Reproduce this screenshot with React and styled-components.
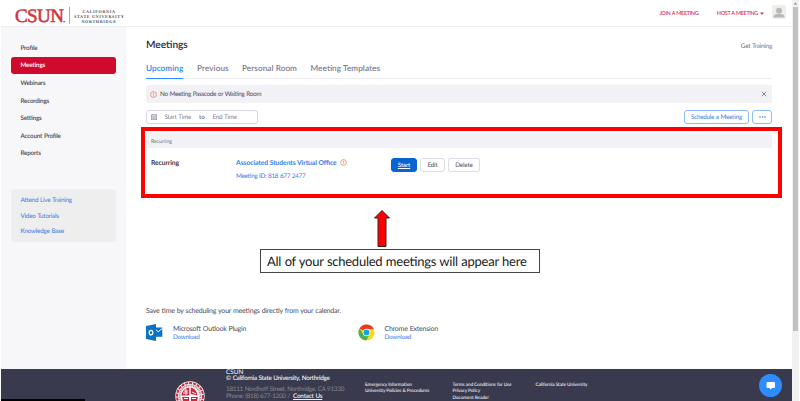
import React from "react";
import styled, { createGlobalStyle } from "styled-components";

const Global = createGlobalStyle`
  * { box-sizing: border-box; }
  body { margin: 0; background: #fff; overflow: hidden; font-family: Lato, "Liberation Sans", sans-serif; text-rendering: geometricPrecision; }
  a { color: inherit; text-decoration: none; }
  svg { display: block; }
`;

const Text = styled.span`
  display: block;
  white-space: nowrap;
  padding-top: ${(p) => p.$drop ?? 1}px;
  margin-bottom: -${(p) => p.$drop ?? 1}px;
  font-size: ${(p) => p.$size}px;
  line-height: ${(p) => p.$line || 10}px;
  font-weight: ${(p) => p.$weight || 400};
  color: ${(p) => p.$color || "#4c4c5c"};
  letter-spacing: ${(p) => p.$track || 0}px;
  word-spacing: ${(p) => (p.$track < -0.1 ? 0.4 : 0)}px;
  font-feature-settings: "liga" 1;
`;

const Page = styled.div`
  position: relative;
  display: flex;
  width: 800px;
  height: 401px;
  padding: 0 1px;
  overflow: hidden;
`;
const Window = styled.div`
  display: flex;
  flex-direction: column;
  width: 791px;
`;
const Header = styled.header`
  display: flex;
  align-items: flex-start;
  height: 27px;
  border-bottom: 1px solid #ededf0;
  padding-left: 14px;
`;
const Brand = styled.div`
  display: flex;
  padding-top: 7px;
`;
const Wordmark = styled.div`
  width: 53px;
  height: 18px;
  font: 400 19px/20px "Liberation Serif", serif;
  -webkit-text-stroke: 0.55px #d2333b;
  letter-spacing: -0.6px;
  color: #d2333b;
  white-space: nowrap;
`;
const Dot = styled.span`
  font-size: 8px;
  letter-spacing: 0;
`;
const BrandRule = styled.div`
  width: 1px;
  height: 17px;
  background: #aaa;
  margin: 0 4px 0 1px;
`;
const BrandName = styled.div`
  padding-top: 2px;
  font: 700 4.2px/5px "Liberation Serif", serif;
  letter-spacing: 0.62px;
  text-align: center;
  color: #555;
  width: 50px;
  white-space: nowrap;
`;
const TopLinks = styled.nav`
  display: flex;
  margin-left: auto;
  padding-top: 8px;
  gap: 18.5px;
`;
const HostLink = styled.div`
  display: flex;
  gap: 2px;
  svg { margin-top: 4px; }
`;
const Avatar = styled.div`
  width: 14px;
  height: 14px;
  margin: 4.5px 6px 0 8px;
  border-radius: 2px;
  background: #efeeea;
  overflow: hidden;
`;
const Body = styled.div`
  display: flex;
  height: 342px;
`;
const Sidebar = styled.aside`
  width: 125px;
  padding: 12px 10px 0;
  background: #f7f7fa;
`;
const NavItem = styled.a`
  display: flex;
  align-items: center;
  height: 17.6px;
  padding-left: 9.5px;
  border-radius: 3px;
  background: ${(p) => (p.$active ? "#cf0a2c" : "transparent")};
`;
const HelpBox = styled.div`
  display: flex;
  flex-direction: column;
  gap: 5.5px;
  height: 53px;
  margin-top: 27px;
  padding: 6px 0 0 9.5px;
  border-radius: 3px;
  background: #eeeeef;
`;
const Main = styled.main`
  width: 646px;
  padding: 9px 0 0 20px;
`;
const TitleRow = styled.div`
  display: flex;
  justify-content: space-between;
  align-items: center;
  height: 17px;
`;
const Tabs = styled.div`
  display: flex;
  gap: 14px;
  height: 26px;
  border-bottom: 1px solid #ececf0;
  padding-top: 9px;
`;
const Tab = styled.div`
  height: 17px;
  width: ${(p) => p.$w}px;
  border-bottom: 1px solid ${(p) => (p.$active ? "#2d8cff" : "transparent")};
`;
const Alert = styled.div`
  display: flex;
  align-items: center;
  height: 18px;
  margin-top: 6px;
  padding: 0 5px 0 4px;
  gap: 3px;
  border-radius: 2.5px;
  background: #f1f1f6;
  & > :last-child { margin-left: auto; }
`;
const Toolbar = styled.div`
  display: flex;
  height: 14px;
  margin-top: 7px;
  gap: 3px;
`;
const DateRange = styled.div`
  display: flex;
  align-items: center;
  width: 112px;
  margin-right: auto;
  padding-left: 3.5px;
  border: 1px solid #d8d8e3;
  border-radius: 3px;
`;
const Slot = styled.div`
  width: ${(p) => p.$w}px;
`;
const Button = styled.button`
  display: flex;
  align-items: center;
  justify-content: center;
  width: ${(p) => p.$w}px;
  height: 14px;
  padding: 0;
  border-radius: 3px;
  font-family: inherit;
  text-rendering: inherit;
  border: 1px solid ${(p) => (p.$kind === "primary" ? "#0b63d2" : p.$kind === "outline" ? "#8bbcf6" : "#dcdce4")};
  background: ${(p) => (p.$kind === "primary" ? "#0b63d2" : "#fff")};
  text-decoration: ${(p) => (p.$kind === "primary" ? "underline" : "none")};
  text-decoration-color: #fff;
`;
const ListHeader = styled.div`
  display: flex;
  align-items: center;
  height: 15px;
  margin-top: 9px;
  padding-left: 5px;
  border-radius: 2.5px;
  background: #f2f2f6;
`;
const MeetingRow = styled.div`
  display: flex;
  height: 51px;
  padding: 9px 0 0 5px;
`;
const MeetingInfo = styled.div`
  width: 155px;
`;
const MeetingTitle = styled.div`
  display: flex;
  align-items: center;
  gap: 3px;
  margin-bottom: 3.5px;
`;
const Actions = styled.div`
  display: flex;
  gap: 3px;
  margin-top: 1px;
`;
const Plugins = styled.section`
  margin-top: 106px;
`;
const PluginRow = styled.div`
  display: flex;
  padding-top: 9px;
`;
const Plugin = styled.div`
  display: flex;
  width: 211.5px;
  svg { margin-right: 10px; flex: none; }
`;
const Footer = styled.footer`
  display: flex;
  height: 32px;
  background: #3a3a4f;
`;
const FooterColumn = styled.div`
  width: ${(p) => p.$w}px;
  padding-top: ${(p) => p.$top}px;
`;
const FooterLine = styled.div`
  display: flex;
  gap: 3px;
  margin-top: ${(p) => p.$gap || 0}px;
`;
const Contact = styled.a`
  text-decoration: underline;
  text-decoration-color: #eee;
`;
const ScrollTrack = styled.div`
  width: 7px;
  height: 401px;
  background: #f1f1f1;
`;
const ScrollThumb = styled.div`
  width: 5px;
  height: 324px;
  margin-left: 1px;
  background: #c1c1c1;
`;
const StatusBar = styled.div`
  position: absolute;
  left: 1px;
  bottom: 0;
  width: 84px;
  height: 2px;
  background: #000;
`;
const Highlight = styled.div`
  position: absolute;
  left: 141px;
  top: 126.5px;
  width: 641px;
  height: 71px;
  border: 4px solid #fe0000;
`;
const Pointer = styled.svg`
  position: absolute;
  left: 373px;
  top: 209px;
`;
const Callout = styled.div`
  position: absolute;
  left: 260px;
  top: 249px;
  width: 280px;
  height: 24px;
  padding: 2px 0 0 6px;
  border: 1px solid #444;
  background: #fff;
`;
const ChatButton = styled.div`
  position: absolute;
  left: 759px;
  top: 374px;
  width: 23px;
  height: 23px;
  border-radius: 50%;
  background: #2d8cff;
`;

const Warning = () => (
  <svg width="7" height="7" viewBox="0 0 7 7" fill="none" stroke="#f0764e" strokeWidth="0.7">
    <circle cx="3.5" cy="3.5" r="2.9" />
    <path d="M3.5 1.8v2.1M3.5 4.5v.8" />
  </svg>
);
const Outlook = () => (
  <svg width="17" height="17" viewBox="0 0 17 17">
    <path d="M10 3.5h6.3v9.3H10z" fill="#0b72c6" />
    <path d="M10 5.7l2.2 2.1 4.1-3.4" fill="none" stroke="#fff" strokeWidth="1" />
    <path d="M0 2L10 0v17L0 15z" fill="#0b72c6" />
    <ellipse cx="5" cy="8.6" rx="1.8" ry="2.3" fill="none" stroke="#fff" strokeWidth="1.3" />
  </svg>
);
const Chrome = () => (
  <svg width="17" height="17" viewBox="0 0 17 17">
    <circle cx="8.5" cy="8.5" r="8" fill="#ffd51f" />
    <path d="M8.5 8.5L1.57 4.5A8 8 0 0 1 15.8 5.2H8.5z" fill="#ea3a20" />
    <path d="M1.57 4.5A8 8 0 0 0 8.2 16.5L11.6 10.5L5.4 10.5z" fill="#4cb051" />
    <circle cx="8.5" cy="8.5" r="3.7" fill="#fff" />
    <circle cx="8.5" cy="8.5" r="3" fill="#12a4dc" />
  </svg>
);
const Seal = () => (
  <svg width="30" height="20" viewBox="0 0 30 20">
    <circle cx="15" cy="15" r="14.7" fill="#f5eeee" />
    <circle cx="15" cy="15" r="13" fill="none" stroke="#cf2840" strokeWidth="2" strokeDasharray="3 1" />
    <circle cx="15" cy="15" r="10.5" fill="none" stroke="#a99a9c" strokeWidth="1.7" strokeDasharray="1.2 .6" />
    <circle cx="15" cy="15" r="8.7" fill="#fff" />
    <path d="M14.3 6.5v8H6.5a8.5 8.5 0 0 1 7.8-8zM15.7 6.5v6.5l6.5 1.5a8.5 8.5 0 0 0-6.500-8zM7 16h7v4H8zM16 16h7l-1 4h-6z" fill="#d3263e" />
    <path d="M8 12h5M9 10h4M11 8v6M17 11l4 2M9 17.5h4M17 17.5h4" stroke="#fff" strokeWidth=".9" />
  </svg>
);

const NAV = ["Profile", "Meetings", "Webinars", "Recordings", "Settings", "Account Profile", "Reports"];
const TABS = [["Upcoming", 37], ["Previous", 31], ["Personal Room", 54.5], ["Meeting Templates", 70]];
const HELP = ["Attend Live Training", "Video Tutorials", "Knowledge Base"];
const PLUGINS = [["Microsoft Outlook Plugin", Outlook], ["Chrome Extension", Chrome]];
const LEGAL = [
  [87.5, ["Emergency Information", "University Policies & Procedures"]],
  [83, ["Terms and Conditions for Use", "Privacy Policy", "Document Reader"]],
  [80, ["California State University"]],
];
const BLUE = "#3b7de8";

export default function App() {
  return (
    <Page>
      <Global />
      <Window>
        <Header>
          <Brand>
            <Wordmark>CSUN<Dot>.</Dot></Wordmark>
            <BrandRule />
            <BrandName>CALIFORNIA<br />STATE UNIVERSITY<br />NORTHRIDGE</BrandName>
          </Brand>
          <TopLinks>
            <Text $size={5.5} $track={-0.36} $color="#d8294b" $weight={500}>JOIN A MEETING</Text>
            <HostLink>
              <Text $size={5.5} $track={-0.36} $color="#d8294b" $weight={500}>HOST A MEETING</Text>
              <svg width="4" height="3" viewBox="0 0 4 3"><path d="M0 .5h4L2 2.7z" fill="#d8294b" /></svg>
            </HostLink>
          </TopLinks>
          <Avatar>
            <svg width="14" height="14" viewBox="0 0 14 14" fill="#b8b8b8">
              <circle cx="7" cy="5.7" r="3" />
              <path d="M1.5 12.5c0-3 2-3.500 5.500-3.500s5.500.5 5.500 3.500z" />
            </svg>
          </Avatar>
        </Header>
        <Body>
          <Sidebar>
            {NAV.map((label) => (
              <NavItem key={label} $active={label === "Meetings"}>
                <Text $size={6.3} $track={-0.21} $weight={600} $color={label === "Meetings" ? "#fff" : "#45454f"}>{label}</Text>
              </NavItem>
            ))}
            <HelpBox>
              {HELP.map((label) => (
                <Text key={label} $size={6.4} $track={-0.26} $color={BLUE}>{label}</Text>
              ))}
            </HelpBox>
          </Sidebar>
          <Main>
            <TitleRow>
              <Text $size={10.2} $line={14} $drop={0} $weight={600} $track={-0.05} $color="#2b2b3b">Meetings</Text>
              <Text $size={6.4} $drop={2} $track={-0.25} $color="#747487">Get Training</Text>
            </TitleRow>
            <Tabs>
              {TABS.map(([label, w], i) => (
                <Tab key={label} $w={w} $active={i === 0}>
                  <Text $size={8.2} $weight={600} $track={0.06} $color={i === 0 ? "#2d7ff0" : "#7c7c8e"}>{label}</Text>
                </Tab>
              ))}
            </Tabs>
            <Alert>
              <Warning />
              <Text $size={6.4} $track={-0.32}>No Meeting Passcode or Waiting Room</Text>
              <svg width="6" height="6" viewBox="0 0 6 6" stroke="#6e6e80" strokeWidth=".8"><path d="M.8.8l4.400 4.400M5.200.8L.8 5.200" /></svg>
            </Alert>
            <Toolbar>
              <DateRange>
                <Slot $w={14}>
                  <svg width="6" height="6" viewBox="0 0 6 6" fill="none" stroke="#858595" strokeWidth=".6">
                    <rect x=".3" y=".8" width="5.4" height="4.9" /><path d="M.3 2.200h5.400M1.700 0v1.300M4.300 0v1.300M1.300 3.400h3.500M1.300 4.600h3.500" />
                  </svg>
                </Slot>
                <Slot $w={34.5}><Text $size={6.3} $track={-0.22} $color="#858595">Start Time</Text></Slot>
                <Slot $w={13.5}><Text $size={6.2}>to</Text></Slot>
                <Text $size={6.3} $track={-0.22} $color="#858595">End Time</Text>
              </DateRange>
              <Button $kind="outline" $w={65}><Text $size={6.3} $track={-0.26} $color={BLUE}>Schedule a Meeting</Text></Button>
              <Button $kind="outline" $w={20}>
                <svg width="7" height="2" viewBox="0 0 7 2" fill={BLUE}><circle cx="1" cy="1" r=".8" /><circle cx="3.5" cy="1" r=".8" /><circle cx="6" cy="1" r=".8" /></svg>
              </Button>
            </Toolbar>
            <ListHeader><Text $size={5.2} $track={-0.1} $color="#6e6e7e">Recurring</Text></ListHeader>
            <MeetingRow>
              <Slot $w={85}><Text $size={6.8} $weight={700} $track={-0.12} $color="#39394d">Recurring</Text></Slot>
              <MeetingInfo>
                <MeetingTitle>
                  <Text $size={6.8} $weight={700} $track={-0.09} $color={BLUE}>Associated Students Virtual Office</Text>
                  <Warning />
                </MeetingTitle>
                <Text $size={6.4} $track={-0.33} $color={BLUE}>Meeting ID: 818 677 2477</Text>
              </MeetingInfo>
              <Actions>
                <Button $kind="primary" $w={26}><Text $size={6.1} $track={-0.1} $weight={500} $color="#fff">Start</Text></Button>
                <Button $w={25}><Text $size={6.3} $track={-0.15}>Edit</Text></Button>
                <Button $w={32}><Text $size={6.3} $track={-0.15}>Delete</Text></Button>
              </Actions>
            </MeetingRow>
            <Plugins>
              <Text $size={7} $track={-0.2}>Save time by scheduling your meetings directly from your calendar.</Text>
              <PluginRow>
                {PLUGINS.map(([name, Icon]) => (
                  <Plugin key={name}>
                    <Icon />
                    <div>
                      <Text $size={7} $line={9} $track={-0.21}>{name}</Text>
                      <Text $size={6.3} $line={8} $track={-0.24} $color={BLUE}>Download</Text>
                    </div>
                  </Plugin>
                ))}
              </PluginRow>
            </Plugins>
          </Main>
        </Body>
        <Footer>
          <FooterColumn $w={174} />
          <FooterColumn $w={51} $top={12}><Seal /></FooterColumn>
          <FooterColumn $w={139} $top={0}>
            <Text $size={6.4} $line={6} $weight={500} $color="#eee">CSUN</Text>
            <Text $size={6.3} $line={6} $track={-0.26} $weight={600} $color="#eee">© California State University, Northridge</Text>
            <FooterLine $gap={4}><Text $size={6.4} $line={8} $track={-0.32} $color="#858590">18111 Nordhoff Street, Northridge, CA 91330</Text></FooterLine>
            <FooterLine>
              <Text $size={6.4} $line={8} $drop={0} $track={-0.32} $color="#858590">Phone: (818) 677-1200 /</Text>
              <Contact><Text $size={6.3} $line={8} $drop={0} $track={-0.2} $weight={600} $color="#eee">Contact Us</Text></Contact>
            </FooterLine>
          </FooterColumn>
          {LEGAL.map(([w, lines]) => (
            <FooterColumn key={w} $w={w} $top={12}>
              {lines.map((line) => (
                <Text key={line} $drop={0} $size={4.7} $line={6.4} $track={-0.08} $weight={600} $color="#e6e6ea">{line}</Text>
              ))}
            </FooterColumn>
          ))}
        </Footer>
      </Window>
      <ScrollTrack>
        <svg width="7" height="7" viewBox="0 0 7 7"><path d="M2 4.500L3.500 2.500 5 4.500z" fill="#777" /></svg>
        <ScrollThumb />
      </ScrollTrack>
      <StatusBar />
      <Highlight />
      <Pointer width="18" height="39" viewBox="0 0 18 39">
        <path d="M9 1.500L16.500 9H13v28.500H5V9H1.500z" fill="#fe0000" stroke="#3a2020" strokeWidth="1" />
      </Pointer>
      <Callout><Text $size={13} $line={19} $drop={0} $track={-0.25} $color="#1a1a1a">All of your scheduled meetings will appear here</Text></Callout>
      <ChatButton>
        <svg width="23" height="23" viewBox="0 0 23 23" fill="#fff"><path d="M8.500 8h6.500q1 0 1 1v4q0 1-1 1h-2l-1.300 1.500L10.500 14h-2q-1 0-1-1V9q0-1 1-1z" /></svg>
      </ChatButton>
    </Page>
  );
}
